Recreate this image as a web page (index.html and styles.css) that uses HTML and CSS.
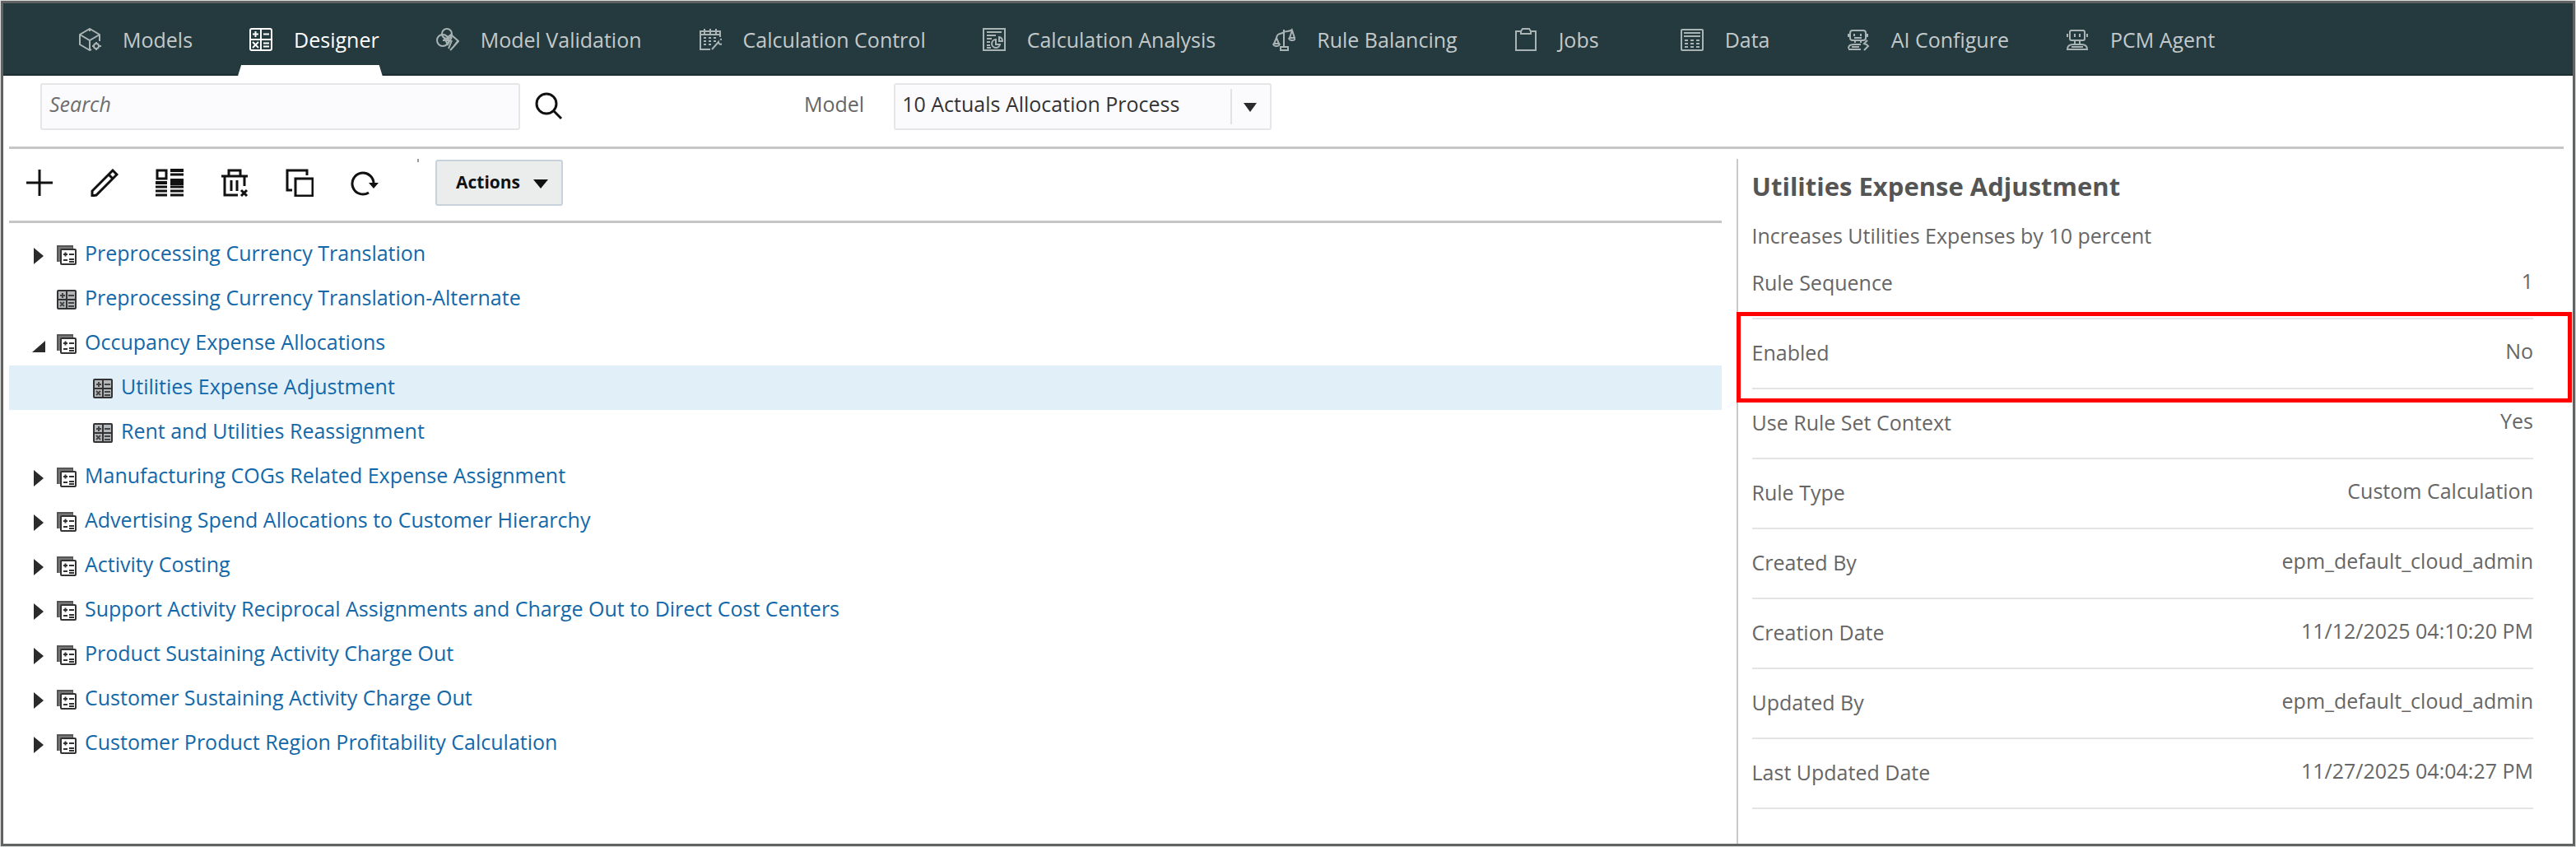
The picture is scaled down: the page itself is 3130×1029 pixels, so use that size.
FILE: index.html
```
<!DOCTYPE html>
<html lang="en">
<head>
    <meta charset="UTF-8">
    <meta name="viewport" content="width=device-width, initial-scale=1.0">
    <title>Designer</title>
    <link rel="stylesheet" href="styles.css">
</head>
<body>
    <svg class="sprite" aria-hidden="true">
        <symbol id="ico-ruleset" viewBox="0 0 24 24">
            <path d="M1 20V1h18v3" fill="none" stroke="#555" stroke-width="2"/>
            <path d="M2 2h17v3H5v15H2z" fill="#777"/>
            <rect x="5" y="5" width="18" height="18" rx="1" fill="#fff" stroke="#333" stroke-width="2"/>
            <path d="M8 11h5M10.500 8.500v5M15 11h6M8 18h5M15 17h6M15 20h6" stroke="#333" stroke-width="2"/>
        </symbol>
        <symbol id="ico-rule" viewBox="0 0 24 24">
            <rect x="1" y="1" width="22" height="22" rx="1" fill="#b4b8bb" stroke="#333" stroke-width="2"/>
            <path d="M12 1v22M1 12h22" stroke="#333" stroke-width="2"/>
            <path d="M4 7h6M7 4v6M14 7h7M4 15l5 5M9 15l-5 5M14 16h7M14 20h7" stroke="#444" stroke-width="2"/>
        </symbol>
        <symbol id="caret-right" viewBox="0 0 12 20">
            <path d="M0 0l12 10L0 20z" fill="#2b2b2b"/>
        </symbol>
        <symbol id="caret-open" viewBox="0 0 16 14">
            <path d="M16 0v14H0z" fill="#2b2b2b"/>
        </symbol>
    </svg>

    <div class="app">
        <nav class="tabs">
            <a href="#" class="tab">
                <svg class="tab-icon" viewBox="0 0 28 28"><path d="M16 26l-2 1L2 20V8l12-7 12 7v8M2 8l12 7 12-7M14 15v12M2 8l5 3M14 1v3"/><circle cx="22" cy="22" r="3"/><path d="M22 17v2M22 25v2M17 22h2M25 22h3"/></svg>
                Models
            </a>
            <a href="#" class="tab active">
                <svg class="tab-icon" viewBox="0 0 28 28"><rect x="1" y="1" width="26" height="26" rx="2"/><path d="M14 1v26M1 14h26M4 7.500h7M7.500 4v7M17 7.500h7M4 17l7 7M11 17l-7 7M17 18.500h7M17 22.500h7"/></svg>
                Designer
            </a>
            <a href="#" class="tab">
                <svg class="tab-icon" viewBox="0 0 28 28"><circle cx="13" cy="7" r="6"/><circle cx="8" cy="15" r="7"/><path d="M13 12l5-4 9 8-8 9-2 2M15 25l4-10M9 11l5 9 5-9M8 15h10M26 16l-6 8"/></svg>
                Model Validation
            </a>
            <a href="#" class="tab">
                <svg class="tab-icon" viewBox="0 0 28 28"><path d="M14 26H2V4h24v7M2 8h24M7 1v6M14 1v6M21 1v6M6 12h3M12 12h3M18 12h3M6 16h3M12 16h3M18 16h3M6 20h3M12 20h3M16 26l8-9a3 3 0 1 0 2-3"/></svg>
                Calculation Control
            </a>
            <a href="#" class="tab">
                <svg class="tab-icon" viewBox="0 0 28 28"><rect x="1" y="1" width="26" height="26"/><path d="M5 5h18M5 9h11M5 13h6M5 17h4M5 21h4M5 24h5M16 14a5 5 0 1 0 5 6h-5zM20 11v5h4a5 5 0 0 0-4-5z"/></svg>
                Calculation Analysis
            </a>
            <a href="#" class="tab">
                <svg class="tab-icon" viewBox="0 0 28 28"><path d="M14 2v20M10 23h9v4h-9zM5 12c1-7 6-4 9-7 3-2 7 0 10-3M5 12l-3 7h6zM1 19a4 3 0 0 0 8 0M24 3l-3 9h6zM20 12a4 3 0 0 0 8 0"/></svg>
                Rule Balancing
            </a>
            <a href="#" class="tab">
                <svg class="tab-icon" viewBox="0 0 28 28"><path d="M8 4H2v23h24V4h-6M10 1h8l2 3v3H8V4z"/></svg>
                Jobs
            </a>
            <a href="#" class="tab">
                <svg class="tab-icon" viewBox="0 0 28 28"><rect x="1" y="2" width="26" height="25" rx="1"/><path d="M4 6h20M4 10h20M5 15h4M12 15h4M19 15h4M5 19h4M12 19h4M19 19h4M5 23h4M12 23h4M19 23h4"/></svg>
                Data
            </a>
            <a href="#" class="tab">
                <svg class="tab-icon" viewBox="0 0 28 28"><rect x="4" y="3" width="19" height="12" rx="3"/><path d="M2 7v4M25 7v4M9 7v3M17 7v3M9 12h9M10 15v3M17 15v3M2 25c0-5 4-5 8-5h7M2 26h15M6 23h9M25 15l-4 4 3 1 2 2-5 5"/></svg>
                AI Configure
            </a>
            <a href="#" class="tab">
                <svg class="tab-icon" viewBox="0 0 28 28"><rect x="5" y="3" width="18" height="12" rx="2"/><path d="M2 7v4M26 7v4M11 7v4M17 7v4M11 15v4M17 15v4M2 26c0-5 3-6 7-6h10c4 0 7 1 7 6zM7 23h14"/></svg>
                PCM Agent
            </a>
        </nav>

        <form class="filter-bar">
            <input type="text" class="search" placeholder="Search" aria-label="Search">
            <button type="button" class="icon-btn" aria-label="Search">
                <svg viewBox="0 0 34 34"><circle cx="14" cy="14" r="12"/><path d="M22 22l10 10"/></svg>
            </button>
            <label class="model-label" for="model">Model</label>
            <div class="select-wrap">
                <select id="model">
                    <option>10 Actuals Allocation Process</option>
                </select>
            </div>
        </form>

        <main class="content">
            <section class="rules">
                <div class="toolbar">
                    <button type="button" class="icon-btn" aria-label="Add">
                        <svg viewBox="0 0 34 34"><path d="M17 1v32M1 17h32"/></svg>
                    </button>
                    <button type="button" class="icon-btn" aria-label="Edit">
                        <svg viewBox="0 0 34 34"><path d="M27 2l5 5L7 32l-5 1v-6zM22 7l5 5"/></svg>
                    </button>
                    <button type="button" class="icon-btn" aria-label="Mass edit">
                        <svg viewBox="0 0 34 34"><rect x="2" y="2" width="11" height="10"/><path d="M0 17h14M18 2h16M18 14h16M18 18h16" stroke-width="4"/><path d="M0 22h14M0 27h14M0 32h14M18 7h16M18 22h16M18 27h16M18 32h16"/></svg>
                    </button>
                    <button type="button" class="icon-btn" aria-label="Delete">
                        <svg viewBox="0 0 34 34"><path d="M1 9h32M10 9V2h14v7M5 9v23h16M29 9v12M13 14v13M20 14v13M25 26l7 7M32 26l-7 7"/></svg>
                    </button>
                    <button type="button" class="icon-btn" aria-label="Copy">
                        <svg viewBox="0 0 34 34"><path d="M8 26H2V2h24v6"/><rect x="12" y="12" width="21" height="21"/></svg>
                    </button>
                    <button type="button" class="icon-btn" aria-label="Refresh">
                        <svg viewBox="0 0 34 34"><path d="M22 29a13 13 0 1 1 6-11"/><path d="M22 17h12l-6 7z" fill="#111" stroke="none"/></svg>
                    </button>
                    <span class="separator"></span>
                    <button type="button" class="actions-btn">Actions</button>
                </div>

                <ul class="tree">
                    <li class="node">
                        <svg class="caret"><use href="#caret-right"/></svg>
                        <svg class="node-icon"><use href="#ico-ruleset"/></svg>
                        <a href="#">Preprocessing Currency Translation</a>
                    </li>
                    <li class="node">
                        <span class="caret"></span>
                        <svg class="node-icon"><use href="#ico-rule"/></svg>
                        <a href="#">Preprocessing Currency Translation-Alternate</a>
                    </li>
                    <li class="node">
                        <svg class="caret open"><use href="#caret-open"/></svg>
                        <svg class="node-icon"><use href="#ico-ruleset"/></svg>
                        <a href="#">Occupancy Expense Allocations</a>
                    </li>
                    <li class="node child selected">
                        <svg class="node-icon"><use href="#ico-rule"/></svg>
                        <a href="#">Utilities Expense Adjustment</a>
                    </li>
                    <li class="node child">
                        <svg class="node-icon"><use href="#ico-rule"/></svg>
                        <a href="#">Rent and Utilities Reassignment</a>
                    </li>
                    <li class="node">
                        <svg class="caret"><use href="#caret-right"/></svg>
                        <svg class="node-icon"><use href="#ico-ruleset"/></svg>
                        <a href="#">Manufacturing COGs Related Expense Assignment</a>
                    </li>
                    <li class="node">
                        <svg class="caret"><use href="#caret-right"/></svg>
                        <svg class="node-icon"><use href="#ico-ruleset"/></svg>
                        <a href="#">Advertising Spend Allocations to Customer Hierarchy</a>
                    </li>
                    <li class="node">
                        <svg class="caret"><use href="#caret-right"/></svg>
                        <svg class="node-icon"><use href="#ico-ruleset"/></svg>
                        <a href="#">Activity Costing</a>
                    </li>
                    <li class="node">
                        <svg class="caret"><use href="#caret-right"/></svg>
                        <svg class="node-icon"><use href="#ico-ruleset"/></svg>
                        <a href="#">Support Activity Reciprocal Assignments and Charge Out to Direct Cost Centers</a>
                    </li>
                    <li class="node">
                        <svg class="caret"><use href="#caret-right"/></svg>
                        <svg class="node-icon"><use href="#ico-ruleset"/></svg>
                        <a href="#">Product Sustaining Activity Charge Out</a>
                    </li>
                    <li class="node">
                        <svg class="caret"><use href="#caret-right"/></svg>
                        <svg class="node-icon"><use href="#ico-ruleset"/></svg>
                        <a href="#">Customer Sustaining Activity Charge Out</a>
                    </li>
                    <li class="node">
                        <svg class="caret"><use href="#caret-right"/></svg>
                        <svg class="node-icon"><use href="#ico-ruleset"/></svg>
                        <a href="#">Customer Product Region Profitability Calculation</a>
                    </li>
                </ul>
            </section>

            <aside class="details">
                <h2>Utilities Expense Adjustment</h2>
                <p>Increases Utilities Expenses by 10 percent</p>
                <dl>
                    <div class="detail-row"><dt>Rule Sequence</dt><dd>1</dd></div>
                    <div class="detail-row highlight"><dt>Enabled</dt><dd>No</dd></div>
                    <div class="detail-row"><dt>Use Rule Set Context</dt><dd>Yes</dd></div>
                    <div class="detail-row"><dt>Rule Type</dt><dd>Custom Calculation</dd></div>
                    <div class="detail-row"><dt>Created By</dt><dd>epm_default_cloud_admin</dd></div>
                    <div class="detail-row"><dt>Creation Date</dt><dd>11/12/2025 04:10:20 PM</dd></div>
                    <div class="detail-row"><dt>Updated By</dt><dd>epm_default_cloud_admin</dd></div>
                    <div class="detail-row"><dt>Last Updated Date</dt><dd>11/27/2025 04:04:27 PM</dd></div>
                </dl>
            </aside>
        </main>
    </div>
</body>
</html>
```
FILE: styles.css
```
* {
    box-sizing: border-box;
}
body {
    margin: 0;
    padding: 1px;
    background: #d9dcdb;
    font-family: "Open Sans", "Noto Sans", sans-serif;
    font-size: 25px;
    line-height: 34px;
    color: #666;
}
a {
    text-decoration: none;
}
button, input, select {
    font: inherit;
}
.sprite {
    display: none;
}
.app {
    display: flex;
    flex-direction: column;
    min-height: calc(100vh - 2px);
    border: 3px solid #616262;
    background: #fff;
}

/* top navigation */
.tabs {
    display: flex;
    gap: 51px;
    height: 88px;
    padding-left: 77px;
    background: #243a3e;
    border-bottom: 2px solid #1b2d31;
}
.tab {
    position: relative;
    display: flex;
    align-items: center;
    gap: 26px;
    min-width: 151px;
    padding: 2px 4px 0 14px;
    color: #c3c9ca;
    white-space: nowrap;
}
.tab-icon {
    flex: none;
    width: 28px;
    height: 28px;
    fill: none;
    stroke: #aab4b5;
    stroke-width: 2;
}
.tab.active {
    color: #fff;
}
.tab.active .tab-icon {
    stroke: #fff;
}
.tab.active::after {
    content: "";
    position: absolute;
    left: 0;
    right: 0;
    bottom: -2px;
    height: 13px;
    background: #fff;
    clip-path: polygon(4px 0, calc(100% - 4px) 0, 100% 100%, 0 100%);
}

/* search and model */
.filter-bar {
    display: flex;
    align-items: flex-start;
    height: 89px;
    margin: 0 11px 0 7px;
    padding: 9px 0 0 38px;
    border-bottom: 3px solid #c6c6c6;
}
.icon-btn {
    flex: none;
    width: 34px;
    height: 34px;
    padding: 0;
    border: none;
    background: none;
    cursor: pointer;
}
.icon-btn svg {
    display: block;
    width: 34px;
    height: 34px;
    fill: none;
    stroke: #111;
    stroke-width: 3;
}
.search {
    width: 583px;
    height: 57px;
    margin-right: 18px;
    padding: 0 9px 8px;
    border: 2px solid #e6e6e8;
    border-radius: 3px;
    background: #fbfbfe;
    color: #333;
}
.search::placeholder {
    color: #6e6e6e;
    font-style: italic;
}
.filter-bar .icon-btn {
    margin-top: 11px;
}
.model-label {
    margin: 8px 36px 0 293px;
}
.select-wrap {
    position: relative;
}
.select-wrap select {
    width: 459px;
    height: 57px;
    padding: 0 60px 8px 8px;
    border: 2px solid #e6e6e8;
    border-radius: 3px;
    background: #fbfbfe;
    color: #333;
    appearance: none;
}
.select-wrap::before {
    content: "";
    position: absolute;
    top: 7px;
    right: 48px;
    width: 2px;
    height: 43px;
    background: #e2e2e4;
}
.select-wrap::after {
    content: "";
    position: absolute;
    top: 24px;
    right: 18px;
    border: 8px solid transparent;
    border-top: 11px solid #2b2b2b;
    border-bottom: none;
    pointer-events: none;
}

/* left side */
.content {
    flex: 1;
    display: grid;
    grid-template-columns: 29fr 14fr;
}
.rules {
    padding: 0 18px 0 7px;
}
.toolbar {
    display: flex;
    align-items: center;
    gap: 45px;
    height: 90px;
    padding: 0 0 5px 20px;
    border-bottom: 3px solid #c6c6c6;
}
.separator {
    align-self: flex-start;
    width: 2px;
    height: 4px;
    margin: 12px -25px 0 2px;
    background: #999;
}
.actions-btn {
    display: flex;
    align-items: center;
    gap: 16px;
    height: 56px;
    padding: 0 16px 2px 23px;
    border: 2px solid #c8d2dc;
    border-radius: 3px;
    background: #ebedec;
    color: #111;
    font-size: 21px;
    font-weight: 700;
    cursor: pointer;
}
.actions-btn::after {
    content: "";
    margin-top: 4px;
    border: 9px solid transparent;
    border-top: 11px solid #111;
    border-bottom: none;
}
.tree {
    margin: 0;
    padding: 11px 0;
    list-style: none;
}
.node {
    display: flex;
    align-items: center;
    height: 54px;
    padding-left: 28px;
}
.node.child {
    padding-left: 102px;
}
.node.selected {
    background: #e1eff8;
}
.node a {
    padding-bottom: 4px;
    color: #1268a9;
    white-space: nowrap;
}
.caret {
    flex: none;
    width: 16px;
    height: 20px;
    margin: 4px 14px 0 0;
}
.caret.open {
    height: 14px;
    margin-top: 8px;
}
.node-icon {
    flex: none;
    width: 24px;
    height: 24px;
    margin: 2px 10px 0 0;
}

/* right side */
.details {
    margin-top: 12px;
    padding: 11px 48px 0 17px;
    border-left: 2px solid #c9c9c9;
}
.details h2 {
    margin: 0 0 21px;
    font-size: 31px;
    line-height: 44px;
    color: #555;
}
.details p {
    margin: 0;
}
.details dl {
    margin: 0;
}
.detail-row {
    position: relative;
    display: flex;
    justify-content: space-between;
    height: 85px;
    padding-top: 23px;
    border-bottom: 2px solid #e4e4e4;
}
.detail-row dd {
    margin: -2px 0 0;
}
.highlight::after {
    content: "";
    position: absolute;
    inset: -9px -47px -18px -19px;
    border: 5px solid #f00;
}
```
